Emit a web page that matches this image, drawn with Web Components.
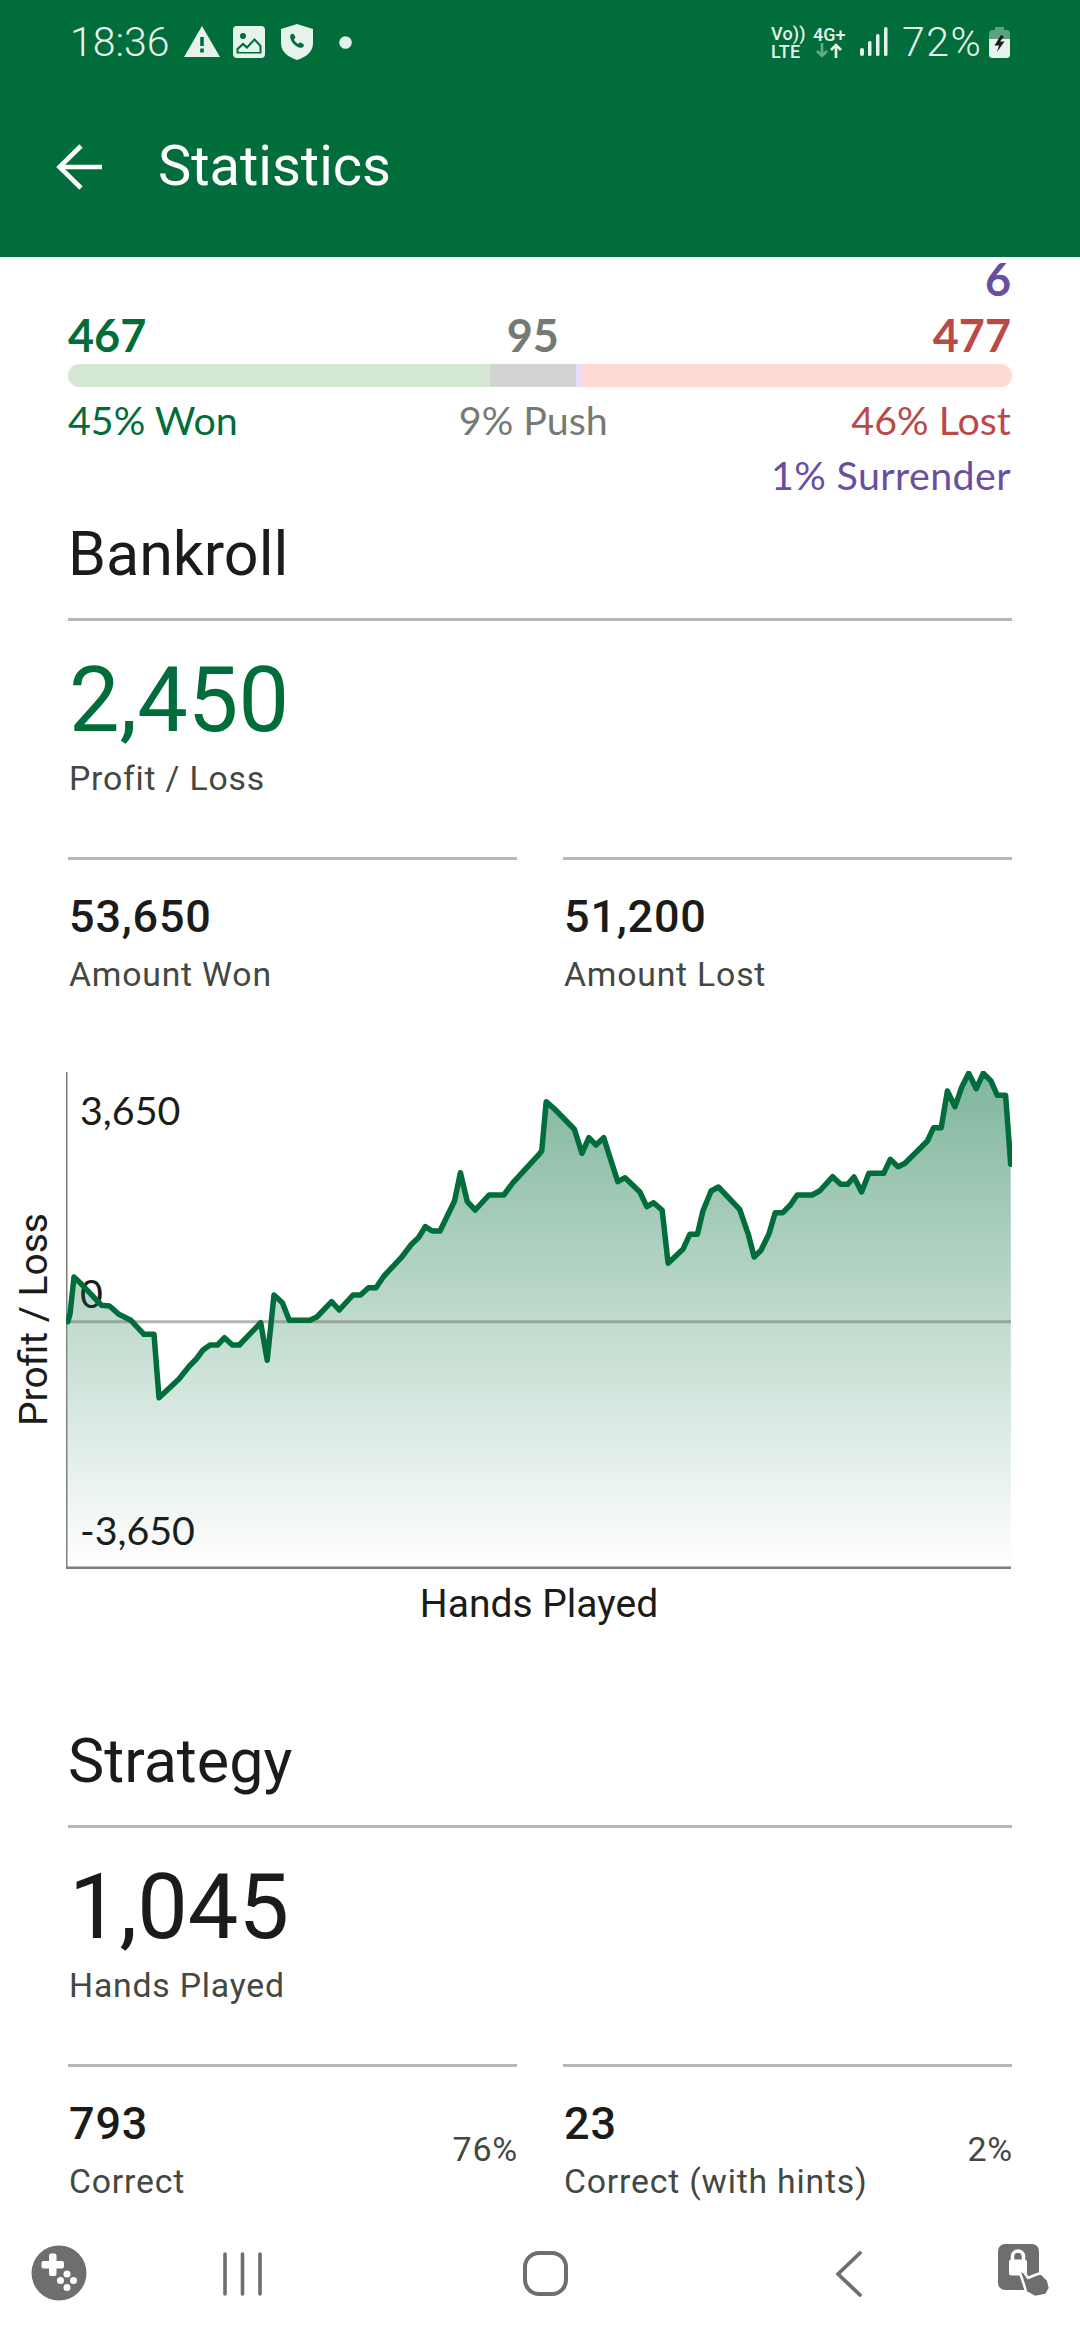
<!DOCTYPE html>
<html lang="en">
<head>
<meta charset="utf-8">
<title>Statistics</title>
<style>
  html, body { margin: 0; height: 100%; background: #fff; }
  body { width: 1080px; height: 2340px; display: flex; flex-direction: column; overflow: hidden; font-family: Roboto, "Noto Sans", sans-serif; }
  main { flex: 1; min-height: 0; }
</style>
</head>
<body>
  <app-header title-text="Statistics"></app-header>
  <main>
    <outcome-bar won="467" push="95" surrender="6" lost="477"></outcome-bar>

    <stat-section heading="Bankroll">
      <stat-figure big accent>
        <span slot="value">2,450</span>
        <span slot="label">Profit / Loss</span>
      </stat-figure>
      <stat-pair>
        <stat-figure><span slot="value">53,650</span><span slot="label">Amount Won</span></stat-figure>
        <stat-figure><span slot="value">51,200</span><span slot="label">Amount Lost</span></stat-figure>
      </stat-pair>
      <profit-chart></profit-chart>
    </stat-section>

    <stat-section heading="Strategy" class="second">
      <stat-figure big>
        <span slot="value">1,045</span>
        <span slot="label">Hands Played</span>
      </stat-figure>
      <stat-pair>
        <stat-figure percent="76%"><span slot="value">793</span><span slot="label">Correct</span></stat-figure>
        <stat-figure percent="2%"><span slot="value">23</span><span slot="label">Correct (with hints)</span></stat-figure>
      </stat-pair>
    </stat-section>
  </main>
  <nav-bar></nav-bar>

<script>
(function () {
  'use strict';

  var GREEN = '#016d3b';

  /* Base: every element only needs to hand over its html */
  class ShadowEl extends HTMLElement {
    connectedCallback() {
      if (this.shadowRoot) return;
      this.attachShadow({ mode: 'open' });
      this.shadowRoot.innerHTML = this.render();
    }
  }

  /* ── status bar + toolbar ── */
  class AppHeader extends ShadowEl {
    render() {
      return `
        <style>
          :host { display: block; height: 257px; background: ${GREEN}; color: #fff; }
          .status { height: 84px; display: flex; align-items: center; padding: 0 0 0 70px; color: #e6f3ec; font-size: 41px; font-weight: 300; box-sizing: border-box; }
          .status svg { display: block; fill: currentColor; flex: none; }
          .time { width: 114px; line-height: 84px; }
          .left { display: flex; align-items: center; flex: 1; }
          .net { width: 31px; font-size: 18px; font-weight: 500; line-height: 18px; letter-spacing: .2px; margin-right: 11px; white-space: nowrap; padding-top: 1px; }
          .g4 { width: 34px; font-size: 18px; font-weight: 500; line-height: 17px; margin-right: 13px; }
          .pct { width: 87px; line-height: 84px; letter-spacing: 1.5px; white-space: nowrap; }
          .bar { height: 173px; display: flex; align-items: center; padding: 0 0 9px 56px; box-sizing: border-box; }
          .bar svg { display: block; width: 46px; height: 46px; margin-right: 56px; margin-top: 2px; }
          h1 { margin: 0; font-size: 56px; font-weight: 400; line-height: 60px; }
        </style>
        <div class="status">
          <div class="left">
            <span class="time">18:36</span>
            <svg width="36" height="31" viewBox="0 0 36 31" style="margin-top:-1px"><path fill-rule="evenodd" d="M18 0 36 31H0ZM16.2 11v9h3.6v-9ZM16.2 22.5v4h3.6v-4Z"/></svg>
            <svg width="32" height="32" viewBox="0 0 32 32" style="margin-left:13px"><rect width="32" height="32" rx="4"/><circle cx="10" cy="10" r="3" fill="${GREEN}"/><path d="M3.5 22.5 10 16.5l4 3.5 7.5-8 7 7.5V27.5h-25Z" fill="${GREEN}"/><path d="M5.5 23.5 10 19.5l4 3.5 7.5-8 5 5.5v5.5h-21Z"/></svg>
            <svg width="32" height="36" viewBox="0 0 32 36" style="margin-left:16px"><path d="M16 0 32 5V19C32 28 25 33 16 36 7 33 0 28 0 19V5Z"/><path d="M10 10.5c1.2-1 2.6-1 3.2.2l1 2c.3.7.2 1.3-.4 1.8l-1 .8c.8 2 2.4 3.7 4.4 4.6l1-1c.6-.5 1.2-.6 1.9-.2l2 1.2c1.1.7 1.1 2-.1 3.1-1.6 1.4-4 1-7-1-3.4-2.3-5.7-6-5.8-9-.1-1 .2-2 .8-2.5Z" fill="${GREEN}"/></svg>
            <svg width="13" height="13" viewBox="0 0 13 13" style="margin-left:26px"><circle cx="6.5" cy="6.5" r="6.3"/></svg>
          </div>
          <div class="net">Vo))<br>LTE</div>
          <div class="g4">4G+
            <svg width="33" height="15" viewBox="0 0 33 15" style="fill:none;stroke:currentColor;stroke-width:2.6px"><path d="M9 0V13M4 8l5 5 5-5" opacity=".45"/><path d="M23 15V2M18 7l5-5 5 5"/></svg>
          </div>
          <svg width="29" height="30" viewBox="0 0 29 30" style="margin-right:13px"><rect x="0" y="21" width="4" height="8" rx="2"/><rect x="8" y="14" width="3.5" height="15" rx="1.5"/><rect x="16" y="7" width="3.5" height="22" rx="1.5"/><rect x="24" y="0" width="3.5" height="29" rx="1.5"/></svg>
          <span class="pct">72%</span>
          <svg width="21" height="31" viewBox="0 0 21 31"><path d="M6 0h9v3h2.5a3.5 3.5 0 0 1 3.5 3.5V12H0V6.5A3.5 3.5 0 0 1 3.5 3H6Z" opacity=".4"/><path d="M0 12h21v15.5a3.5 3.5 0 0 1-3.5 3.5h-14A3.5 3.5 0 0 1 0 27.5Z"/><path d="M12 8 5.5 18.5H10L8 25l7.5-10.5H11l4-5Z" fill="#1c1c1c"/></svg>
          <span style="width:70px"></span>
        </div>
        <div class="bar">
          <svg viewBox="0 0 46 46" fill="none" stroke="#fff" stroke-width="4.6"><path d="M46 23H4M25 2 3.5 23 25 44"/></svg>
          <h1>${this.getAttribute('title-text')}</h1>
        </div>`;
    }
  }

  /* ── won / push / surrender / lost tally ── */
  class OutcomeBar extends ShadowEl {
    render() {
      var won = +this.getAttribute('won'), push = +this.getAttribute('push'),
          sur = +this.getAttribute('surrender'), lost = +this.getAttribute('lost');
      var total = won + push + sur + lost;
      var pct = function (n) { return Math.round(n / total * 100) + '%'; };
      return `
        <style>
          :host { display: block; padding: 0 68px; font-family: Lato, "Noto Sans", sans-serif; }
          .g { color: ${GREEN}; } .n { color: #757a73; } .r { color: #ba4a48; } .p { color: #6a4fa0; }
          .count { font-size: 45px; font-weight: 700; line-height: 45px; white-space: nowrap; }
          .grid { display: grid; grid-template-columns: ${won}fr ${push}fr ${sur}fr ${lost}fr; }
          .sur { text-align: right; padding-right: 1px; }
          .counts { margin-top: 11px; }
          .mid { display: flex; justify-content: center; }
          .end { grid-column: 4; text-align: right; padding-right: 1px; }
          .track { height: 23px; margin-top: 6px; border-radius: 11px; overflow: hidden; }
          .track i { display: block; }
          .lbl { font-size: 39.4px; line-height: 44px; white-space: nowrap; }
          .labels { margin-top: 11px; }
          .surlbl { text-align: right; margin-top: 11px; padding-right: 1px; letter-spacing: .4px; }
        </style>
        <div class="count p sur">${sur}</div>
        <div class="grid counts count">
          <span class="g">${won}</span>
          <span class="n mid">${push}</span>
          <span></span>
          <span class="r end">${lost}</span>
        </div>
        <div class="grid track">
          <i style="background:#d5e8d4"></i><i style="background:#d3d4d1"></i><i style="background:#e8ddf8"></i><i style="background:#ffd9d5"></i>
        </div>
        <div class="grid labels lbl">
          <span class="g">${pct(won)} Won</span>
          <span class="n mid">${pct(push)} Push</span>
          <span></span>
          <span class="r end">${pct(lost)} Lost</span>
        </div>
        <div class="lbl p surlbl">${pct(sur)} Surrender</div>`;
    }
  }

  /* ── titled group of figures ── */
  class StatSection extends ShadowEl {
    render() {
      return `
        <style>
          :host { display: block; padding: 0 68px; margin-top: 21px; }
          :host(.second) { margin-top: 97px; }
          h2 { margin: 0; font-size: 61px; font-weight: 400; line-height: 72px; color: #1b1c1a; }
          hr { border: 0; height: 3px; background: #b5b8b3; margin: 28px 0 0; }
        </style>
        <h2>${this.getAttribute('heading')}</h2>
        <hr>
        <slot></slot>`;
    }
  }

  class StatPair extends ShadowEl {
    render() {
      return `
        <style>
          :host { display: grid; grid-template-columns: 1fr 1fr; gap: 46px; margin-top: 54px; }
          ::slotted(stat-figure) { border-top: 3px solid #b5b8b3; }
        </style>
        <slot></slot>`;
    }
  }

  /* value + caption, with an optional percentage on the right */
  class StatFigure extends ShadowEl {
    render() {
      var percent = this.getAttribute('percent');
      return `
        <style>
          :host { display: block; position: relative; color: #1b1c1a; padding: 29px 0 0 1px; }
          :host([big]) { padding-top: 27px; }
          .value { font-size: 45px; font-weight: 500; line-height: 56px; letter-spacing: .8px; }
          :host([big]) .value { font-size: 90px; font-weight: 400; line-height: 106px; letter-spacing: 0; }
          :host([accent]) .value { color: ${GREEN}; }
          .label { font-size: 33.75px; line-height: 48px; letter-spacing: .8px; color: #444842; margin-top: 6px; white-space: nowrap; }
          :host([big]) .label { margin-top: 1px; }
          .pct { position: absolute; right: -1px; top: 58px; font-size: 34px; letter-spacing: .8px; line-height: 48px; color: #444842; }
        </style>
        <div class="value"><slot name="value"></slot></div>
        <div class="label"><slot name="label"></slot></div>
        ${percent ? '<div class="pct">' + percent + '</div>' : ''}`;
    }
  }

  /* ── profit curve, one point per sampled hand, in page pixels ── */
  var CURVE = [
    [67.8,1320.7],[70,1313],[74,1276],[80,1281.7],[89.5,1291.7],[101.6,1304.3],[109.5,1305],[118.8,1313.3],
    [130.9,1319.3],[144,1333.3],[154,1333.3],[159,1396.7],[179,1378],[189.4,1365],[196.3,1358],[203,1349],
    [210,1344],[217.6,1344],[224.5,1336.7],[232.4,1344],[239.3,1344],[260.7,1321.7],[267.2,1359.3],[274,1294],
    [282.4,1301.7],[289.3,1319.3],[310,1319.3],[316.8,1316],[331.6,1300.7],[339.2,1309],[353,1294],[360.5,1294],
    [368.5,1286.7],[376,1286.7],[384,1275],[401.2,1256.7],[411.5,1243.3],[418.4,1236.7],[425.3,1225.7],[432.2,1230],
    [440,1230],[454.5,1200],[460.4,1171.7],[467.3,1200.7],[475.2,1209],[489,1194],[503.8,1194],[513,1181.7],
    [539,1153.3],[541.7,1150],[546.2,1100.7],[553.8,1107.3],[574.4,1128.3],[582,1152.3],[588.9,1136.7],[596,1144],
    [603.7,1136.7],[610.6,1158.3],[617.8,1180.7],[625,1176.7],[639.9,1191],[646.8,1205.7],[653.6,1201.7],[662.2,1209.3],
    [668.1,1262.3],[682.9,1248.3],[689.8,1233.3],[697.4,1233.3],[702.9,1210],[711.1,1190],[718.4,1186],[739.7,1208.3],
    [748.3,1233.3],[754.2,1256],[761,1249.3],[769,1232.7],[775.2,1211.7],[782.8,1211.7],[790.3,1204],[797.2,1194],
    [812,1194],[819.6,1190],[832.7,1175.7],[840.6,1183.3],[847.5,1183.3],[854,1176],[861.6,1191],[868.9,1172.3],
    [883.7,1172.3],[890.2,1158.3],[898.1,1165.7],[905,1162.3],[927.4,1140],[933.6,1126.7],[941.2,1126.7],[947.4,1090],
    [955,1105.7],[961.8,1086],[968.7,1072.3],[976.3,1087.7],[983.2,1072.3],[991,1080],[997.3,1094.3],[1005.6,1094.3],
    [1010.7,1163.3]
  ];

  class ProfitChart extends ShadowEl {
    render() {
      var line = CURVE.map(function (p) { return p.join(','); }).join(' ');
      var area = 'M67 1566L' + line.replace(/ /g, 'L') + 'L1011 1566Z';
      return `
        <style>
          :host { display: block; margin: 72px 0 0 -68px; }
          .top { display: grid; grid-template-columns: 66px 946px; height: 498px; }
          .ylabel { writing-mode: vertical-rl; transform: rotate(180deg); text-align: center; font-size: 39px; line-height: 68px; color: #1b1c1a; white-space: nowrap; }
          .plot { position: relative; }
          .plot svg { position: absolute; inset: 0; display: block; }
          .tick { position: absolute; left: 14px; font: 39.4px/46px Lato, sans-serif; color: #1b1c1a; }
          .xlabel { text-align: center; font-size: 39px; line-height: 48px; margin-top: 11px; padding-left: 66px; color: #1b1c1a; }
        </style>
        <div class="top">
          <div class="ylabel">Profit / Loss</div>
          <div class="plot">
            <span class="tick" style="top:16px">3,650</span>
            <span class="tick" style="top:199px">0</span>
            <span class="tick" style="top:436px">-3,650</span>
            <svg width="946" height="498" viewBox="66 1070 946 498">
              <defs>
                <linearGradient id="fade" gradientUnits="userSpaceOnUse" x1="0" y1="1072" x2="0" y2="1566">
                  <stop offset="0" stop-color="${GREEN}" stop-opacity=".5"/>
                  <stop offset="1" stop-color="${GREEN}" stop-opacity="0"/>
                </linearGradient>
              </defs>
              <path d="${area}" fill="url(#fade)"/>
              <path d="M66 1320.7H1011" stroke="#757a73" stroke-opacity=".55" stroke-width="3"/>
              <path d="M66 1071V1567H1011" fill="none" stroke="#7b807a" stroke-width="3"/>
              <polyline points="${line}" fill="none" stroke="${GREEN}" stroke-width="5.5" stroke-linejoin="round" stroke-linecap="round"/>
            </svg>
          </div>
        </div>
        <div class="xlabel">Hands Played</div>`;
    }
  }

  /* ── system navigation ── */
  class NavBar extends ShadowEl {
    render() {
      return `
        <style>
          :host { display: flex; flex: none; height: 120px; background: #fff; box-sizing: border-box; align-items: center; position: relative; z-index: 1; color: #6e6e6e; }
          svg { display: block; flex: none; }
        </style>
        <svg width="56" height="56" viewBox="0 0 56 56" style="margin:-15px 0 0 31px">
          <circle cx="28" cy="28" r="27.5" fill="currentColor"/>
          <path d="M18 10.5a2 2 0 0 1 2-2h3.5a2 2 0 0 1 2 2V16H31a2 2 0 0 1 2 2v3.5a2 2 0 0 1-2 2h-5.5V29a2 2 0 0 1-2 2H20a2 2 0 0 1-2-2v-5.5h-5.5a2 2 0 0 1-2-2V18a2 2 0 0 1 2-2H18Z" fill="#fff"/>
          <circle cx="36" cy="29" r="3.5" fill="#fff"/><circle cx="29.5" cy="35.5" r="3.5" fill="#fff"/><circle cx="42.5" cy="35.5" r="3.5" fill="#fff"/><circle cx="36" cy="42.5" r="3.5" fill="#fff"/>
        </svg>
        <svg width="40" height="44" viewBox="0 0 40 44" style="margin:-12px 0 0 135px" fill="none" stroke="currentColor" stroke-width="3.6" stroke-linecap="round">
          <path d="M3 2V42M20.5 2V42M38 2V42"/>
        </svg>
        <svg width="46" height="46" viewBox="0 0 46 46" style="margin:-12px 0 0 261px" fill="none" stroke="currentColor" stroke-width="4">
          <rect x="2" y="2" width="41" height="41" rx="14"/>
        </svg>
        <svg width="28" height="48" viewBox="0 0 28 48" style="margin:-12px 0 0 266px" fill="none" stroke="currentColor" stroke-width="3.8" stroke-linecap="round" stroke-linejoin="round">
          <path d="M25 3 3 24 25 45"/>
        </svg>
        <svg width="54" height="56" viewBox="0 0 54 56" style="margin:-16px 0 0 135px">
          <rect x="0" y="0" width="41" height="46" rx="7" fill="currentColor"/>
          <path d="M14.5 16v-3.5a5.5 5.5 0 0 1 11 0V16" fill="none" stroke="#fff" stroke-width="3.5"/>
          <rect x="11" y="15.5" width="18" height="16" rx="2.5" fill="#fff"/>
          <path d="M22 28.5c1-1.800 3.800-1.300 4.500.4L30 34l7-3 6-2 7 7 2 8-4 7-11 2-9-5-1-4Z" fill="currentColor" stroke="#fff" stroke-width="2.5" stroke-linejoin="round"/>
        </svg>`;
    }
  }

  customElements.define('app-header', AppHeader);
  customElements.define('outcome-bar', OutcomeBar);
  customElements.define('stat-section', StatSection);
  customElements.define('stat-pair', StatPair);
  customElements.define('stat-figure', StatFigure);
  customElements.define('profit-chart', ProfitChart);
  customElements.define('nav-bar', NavBar);
})();
</script>
</body>
</html>
